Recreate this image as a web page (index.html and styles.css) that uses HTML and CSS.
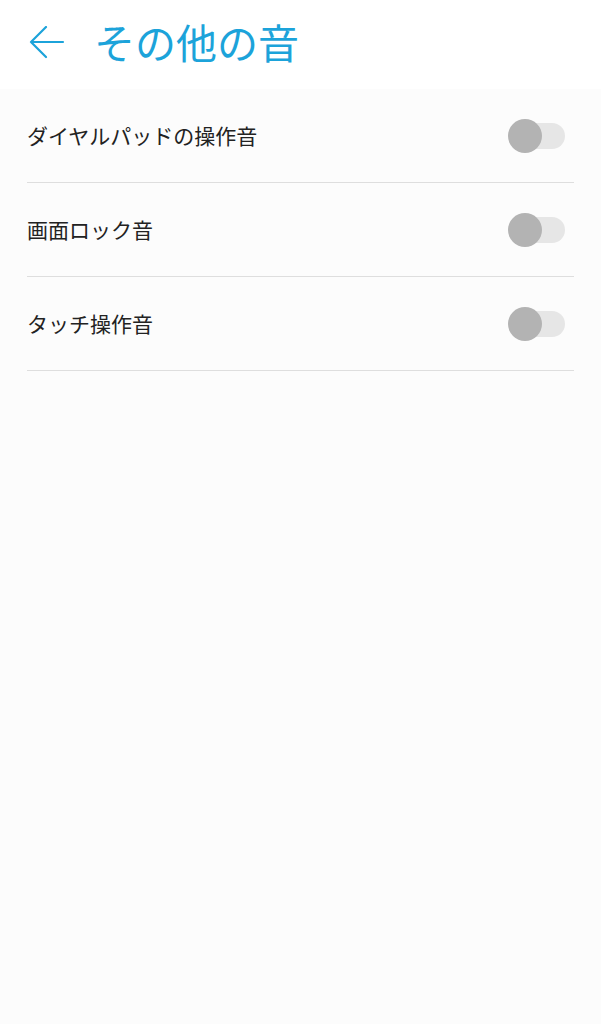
FILE: index.html
```html
<!DOCTYPE html>
<html lang="ja">
  <head>
    <meta charset="UTF-8" />
    <meta name="viewport" content="width=device-width, initial-scale=1.0" />
    <title>その他の音</title>
    <link rel="stylesheet" href="styles.css">
  </head>
  <body>
    <header class="app-bar">
      <svg class="back" width="36" height="34" viewBox="0 0 36 34">
        <path d="M34 16 H2 M17 1 L2 16 L17 31" fill="none" stroke="#1ca3da" stroke-width="2.2" stroke-linecap="round" stroke-linejoin="round" />
      </svg>
      <h1>その他の音</h1>
    </header>
    <main class="list">
      <div class="row">
        <span class="label">ダイヤルパッドの操作音</span>
        <span class="switch"><span class="thumb"></span></span>
      </div>
      <div class="row">
        <span class="label">画面ロック音</span>
        <span class="switch"><span class="thumb"></span></span>
      </div>
      <div class="row">
        <span class="label">タッチ操作音</span>
        <span class="switch"><span class="thumb"></span></span>
      </div>
    </main>
  </body>
</html>
```

FILE: styles.css
```css
body {
  margin: 0;
  padding: 0;
  min-height: 100vh;
  background-color: #fcfcfc;
  font-family: "Noto Sans CJK JP", "Noto Sans", sans-serif;
  color: #222;
}
.app-bar {
  display: flex;
  align-items: center;
  height: 89px;
  padding-left: 29px;
  background-color: #fff;
  box-sizing: border-box;
}
.back {
  flex-shrink: 0;
  margin-top: -4px;
}
.app-bar h1 {
  margin: -6px 0 0 29px;
  font-size: 41px;
  font-weight: 400;
  line-height: 1;
  color: #1ca3da;
}
.list {
  padding: 0 27px;
}
.row {
  display: flex;
  align-items: center;
  justify-content: space-between;
  height: 93px;
  border-bottom: 1px solid #dedede;
}
.label {
  font-size: 21px;
  line-height: 1;
  color: #222;
}
.switch {
  position: relative;
  width: 52px;
  height: 26px;
  margin-right: 9px;
  border-radius: 13px;
  background-color: #e6e6e6;
}
.thumb {
  position: absolute;
  left: -5px;
  top: -4px;
  width: 34px;
  height: 34px;
  border-radius: 50%;
  background-color: #b3b3b3;
}
```
